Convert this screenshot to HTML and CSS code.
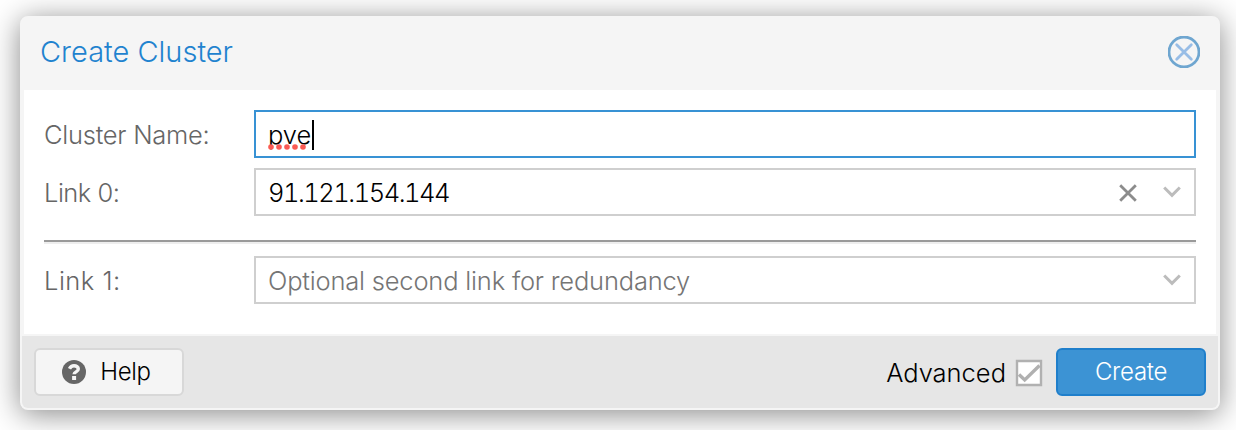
FILE: index.html
```html
<!DOCTYPE html>
<html lang="en">
<head>
<meta charset="utf-8">
<title>Create Cluster</title>
<link rel="stylesheet" href="styles.css">
</head>
<body>
<main class="window">
  <header class="header">
    <h1 class="title">Create Cluster</h1>
    <svg class="close" width="32" height="32" viewBox="0 0 32 32" fill="none"><circle cx="16" cy="16" r="15" stroke="#6fa6d0" stroke-width="2.8"/><path d="M8.7 8.7 23.3 23.3M23.3 8.7 8.7 23.3" stroke="#98bde6" stroke-width="2.8" stroke-linecap="round"/></svg>
  </header>
  <section class="body">
    <div class="row">
      <label class="label name">Cluster Name:</label>
      <div class="field focused"><span>pve</span><i class="caret"></i>
        <svg class="spelling" width="40" height="6" viewBox="0 0 40 6" fill="#fa5a54"><circle cx="3" cy="3" r="2.8"/><circle cx="11" cy="3" r="2.8"/><circle cx="19" cy="3" r="2.8"/><circle cx="27" cy="3" r="2.8"/><circle cx="35" cy="3" r="2.8"/></svg>
      </div>
    </div>
    <div class="row">
      <label class="label link0">Link 0:</label>
      <div class="field"><span class="address">91.121.154.144</span>
        <span class="triggers">
          <svg width="18" height="18" viewBox="0 0 18 18" fill="none" stroke="#8c8c8c" stroke-width="2.8"><path d="M1.2 1.2 16.8 16.8M16.8 1.2 1.2 16.8"/></svg>
          <svg class="arrow" width="18" height="12" viewBox="0 0 18 12" fill="none" stroke="#bcbcbc" stroke-width="3"><path d="M1.2 1.5 9 9.3 16.8 1.5"/></svg>
        </span>
      </div>
    </div>
    <div class="divider"></div>
    <div class="row">
      <label class="label link1">Link 1:</label>
      <div class="field"><span class="placeholder">Optional second link for redundancy</span>
        <span class="triggers"><svg class="arrow" width="18" height="12" viewBox="0 0 18 12" fill="none" stroke="#bcbcbc" stroke-width="3"><path d="M1.2 1.5 9 9.3 16.8 1.5"/></svg></span>
      </div>
    </div>
  </section>
  <footer class="footer">
    <button class="button help"><svg width="24" height="24" viewBox="0 0 24 24"><circle cx="12" cy="12" r="12" fill="#666"/><path d="M7.5 8.8C8.5 6.7 10 5.8 12 5.8c2.5 0 4.3 1.3 4.3 3.2 0 3-4.2 2.7-4.2 5.3" fill="none" stroke="#f5f5f5" stroke-width="3.4"/><path d="M10.1 16h4v4h-4z" fill="#f5f5f5"/></svg><span>Help</span></button>
    <span class="advanced">Advanced</span>
    <svg class="check" width="28" height="28" viewBox="0 0 28 28"><path d="M2 2h24v24H2z" fill="#fff" stroke="#b1b1b1" stroke-width="2.4"/><path d="M4 15.5 9.7 21 24.5 6.5" fill="none" stroke="#b0b0b0" stroke-width="3.4"/></svg>
    <button class="button create">Create</button>
  </footer>
</main>
</body>
</html>
```
FILE: styles.css
```css
* { box-sizing: border-box; }
body {
  margin: 0;
  height: 430px;
  padding: 16px 16px 20px 20px;
  overflow: hidden;
  background: #fff;
  font: 300 25.5px/30px Inter, "Liberation Sans", sans-serif;
}
.window {
  display: flex;
  flex-direction: column;
  width: 1200px;
  height: 394px;
  border: 2px solid #f5f5f5;
  border-radius: 8px;
  background: #f5f5f5;
  box-shadow: 0 4px 30px #888;
}
.header {
  display: flex;
  align-items: center;
  justify-content: space-between;
  height: 72px;
  padding: 0 18px 4px;
}
.title {
  margin: 0;
  color: #1f83cf;
  font-size: 29px;
  font-weight: 300;
}
.close { display: block; }
.body {
  display: flex;
  flex-direction: column;
  gap: 10px;
  height: 244px;
  margin: 0 2px 2px;
  padding: 20px 20px 30px;
  background: #fff;
}
.row { display: flex; height: 48px; }
.label {
  width: 210px;
  padding-top: 10px;
  color: #666;
  white-space: nowrap;
}
.name { letter-spacing: -0.25px; }
.link0 { letter-spacing: -0.5px; }
.link1 { letter-spacing: 0.5px; }
.field {
  position: relative;
  display: flex;
  flex: 1;
  align-items: center;
  padding: 2px 13px 0 12px;
  border: 2px solid #cfcfcf;
  color: #000;
  white-space: nowrap;
}
.focused { border-color: #3892d4; }
.caret { width: 2px; height: 30px; background: #000; margin-left: 1px; }
.spelling { position: absolute; left: 12px; top: 32px; }
.address { font-variant-numeric: tabular-nums; letter-spacing: -1.5px; }
.placeholder { color: #757575; letter-spacing: -0.19px; }
.triggers {
  display: flex;
  align-items: center;
  gap: 26px;
  margin-left: auto;
}
.arrow { margin-bottom: 3px; }
.divider {
  height: 4px;
  margin: 14px 0 2px;
  border-top: 2px solid #9a9a9a;
  border-bottom: 2px solid #eee;
}
.footer {
  display: flex;
  align-items: center;
  height: 72px;
  padding: 0 12px;
  border-radius: 0 0 6px 6px;
  background: #e6e6e6;
}
.button {
  display: flex;
  align-items: center;
  justify-content: center;
  width: 150px;
  height: 48px;
  padding: 0;
  border: 2px solid #d8d8d8;
  border-radius: 6px;
  background: #f5f5f5;
  color: #000;
  font: inherit;
  font-size: 24px;
}
.help { gap: 14px; padding-right: 5px; letter-spacing: -0.3px; }
.advanced { margin: 2px 9px 0 auto; }
.check { margin: 2px 13px 0 0; }
.create {
  border-color: #1f7fcb;
  background: #3c93d4;
  color: #fff;
  letter-spacing: -0.3px;
}
```
